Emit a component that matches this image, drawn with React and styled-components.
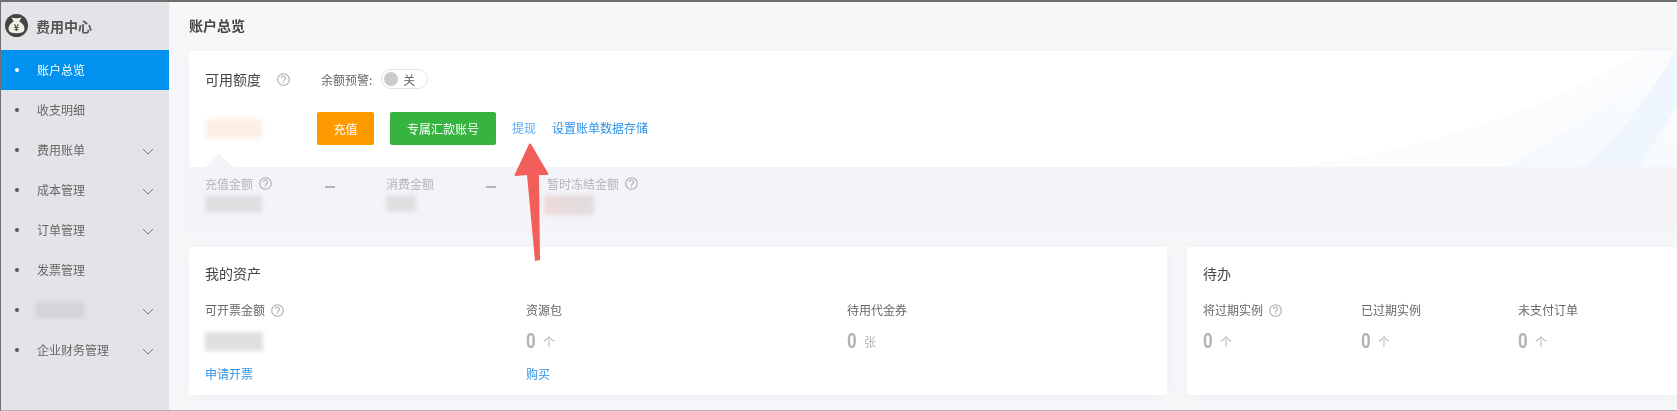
import React from 'react';
import styled, { createGlobalStyle } from 'styled-components';

const Global = createGlobalStyle`
  html, body { margin: 0; padding: 0; background: #f6f7f9; }
  body { font-family: "Noto Sans CJK SC", "Liberation Sans", sans-serif; font-size: 12px; color: #666; }
`;

const Frame = styled.div`
  box-sizing: border-box;
  position: relative;
  width: 1677px;
  height: 411px;
  display: flex;
  overflow: hidden;
  background: #f6f7f9;
  border-top: 2px solid #6f6f6f;
  border-left: 1px solid #6f6f6f;
  border-bottom: 1px solid #b4b4b4;
  filter: blur(0.35px);
`;

const Sidebar = styled.nav`
  flex: 0 0 168px;
  background: #e4e3e7;
`;

const Brand = styled.div`
  box-sizing: border-box;
  height: 48px;
  display: flex;
  align-items: center;
  gap: 8px;
  padding: 0 0 1px 4px;
  font-size: 14px;
  font-weight: 700;
  color: #555;
`;

const NavItem = styled.div`
  box-sizing: border-box;
  height: 40px;
  display: flex;
  align-items: center;
  padding: 0 0 1px 14px;
  color: ${p => (p.$active ? '#fff' : '#666')};
  background: ${p => (p.$active ? '#0092ee' : 'transparent')};
`;

const Bullet = styled.i`
  flex: 0 0 4px;
  height: 4px;
  border-radius: 50%;
  margin-right: 18px;
  background: ${p => (p.$active ? '#fff' : '#555')};
`;

const NavLabel = styled.span`
  flex: 1;
`;

const Chevron = styled.svg`
  width: 12px;
  height: 7px;
  margin-right: 15px;
  margin-top: 3px;
  fill: none;
  stroke: #777;
  stroke-width: 1;
`;

const Main = styled.main`
  flex: 1;
  min-width: 0;
  padding-left: 20px;
`;

const PageTitle = styled.h1`
  margin: 0;
  height: 49px;
  line-height: 46px;
  font-size: 14px;
  font-weight: 700;
  color: #444;
`;

const Card = styled.section`
  background: #fff;
  box-shadow: 0 2px 12px rgba(120, 125, 150, 0.06);
`;

const OverviewCard = styled(Card)`
  height: 177px;
  margin-bottom: 19px;
  display: flex;
  flex-direction: column;
`;

const OverviewTop = styled.div`
  position: relative;
  flex: 0 0 116px;
  box-sizing: border-box;
  padding: 18px 16px 0;
  overflow: hidden;
`;

const Curves = styled.svg`
  position: absolute;
  right: 0;
  top: 0;
  width: 400px;
  height: 116px;
`;

const Notch = styled.i`
  position: absolute;
  left: 16px;
  bottom: 0;
  width: 0;
  height: 0;
  border-left: 14px solid transparent;
  border-right: 14px solid transparent;
  border-bottom: 13px solid #f4f4f8;
`;

const HeadRow = styled.div`
  position: relative;
  height: 20px;
  display: flex;
  align-items: center;
`;

const BigLabel = styled.span`
  font-size: 14px;
  color: #444;
  line-height: 20px;
`;

const Help = styled.svg`
  flex: none;
  width: 13px;
  height: 13px;
  margin-left: ${p => p.$gap || 6}px;
  fill: none;
  stroke: #adadad;
  stroke-width: 1.1;
`;

const WarnLabel = styled.span`
  margin-left: 31px;
  color: #666;
`;

const Toggle = styled.div`
  box-sizing: border-box;
  width: 47px;
  height: 20px;
  margin-left: 9px;
  border: 1px solid #e4e4e4;
  border-radius: 10px;
  display: flex;
  align-items: center;
  padding-left: 2px;
  color: #666;
`;

const Knob = styled.i`
  width: 14px;
  height: 14px;
  border-radius: 50%;
  background: #cbcbcb;
  margin-right: 5px;
`;

const ActionRow = styled.div`
  position: relative;
  height: 33px;
  margin-top: 23px;
  display: flex;
  align-items: center;
`;

const Smudge = styled.span`
  flex: none;
  display: block;
  width: ${p => p.$w}px;
  height: ${p => p.$h}px;
  margin-left: ${p => p.$l || 0}px;
  background: ${p => p.$c || '#dfdfe1'};
  filter: blur(2px);
`;

const AmountSlot = styled.div`
  width: 111px;
  margin-left: 1px;
`;

const ColorButton = styled.button`
  box-sizing: border-box;
  width: ${p => p.$w}px;
  height: 33px;
  margin-right: ${p => p.$r}px;
  border: 0;
  border-radius: 2px;
  background: ${p => p.$bg};
  color: #fff;
  font: inherit;
`;

const Link = styled.a`
  color: ${p => (p.$soft ? '#5aa9ee' : '#2f93e6')};
  margin-right: 16px;
  margin-bottom: 2px;
`;

const OverviewBottom = styled.div`
  flex: 1;
  background: #f4f4f8;
  display: flex;
  align-items: flex-start;
  padding: 7px 0 0 16px;
  color: #b5b5b9;
`;

const Stat = styled.div`
  width: ${p => p.$w}px;
  flex: none;
`;

const StatLabel = styled.div`
  display: flex;
  align-items: center;
  height: 18px;
`;

const Dash = styled.i`
  flex: none;
  width: 10px;
  height: 2px;
  background: #b5b5b9;
  margin: 12px ${p => p.$r}px 0 ${p => p.$l}px;
`;

const StatValue = styled.div`
  margin-top: 3px;
`;

const BottomRow = styled.div`
  display: flex;
  gap: 20px;
`;

const PanelCard = styled(Card)`
  box-sizing: border-box;
  height: 148px;
  padding: 15px 0 0 16px;
  flex: ${p => (p.$wide ? '0 0 978px' : '1')};
`;

const PanelTitle = styled.h2`
  margin: 0;
  height: 22px;
  line-height: 22px;
  font-size: 14px;
  font-weight: 400;
  color: #444;
`;

const Columns = styled.div`
  display: flex;
  margin-top: 17px;
`;

const Column = styled.div`
  flex: 0 0 ${p => p.$w}px;
`;

const ColumnLabel = styled.div`
  height: 18px;
  line-height: 18px;
  display: flex;
  align-items: center;
  color: #666;
`;

const Count = styled.div`
  height: 30px;
  margin-top: 7px;
  display: flex;
  align-items: center;
  gap: 8px;
  color: #b5b5b5;
  font-size: 12px;
`;

const Digit = styled.b`
  display: block;
  width: 9px;
  font-family: Roboto, "Liberation Sans", sans-serif;
  font-size: 21px;
  font-weight: 700;
  color: #b3b3b3;
  transform: scaleX(0.8);
  transform-origin: left center;
`;

const AmountBox = styled.div`
  height: 30px;
  margin-top: 7px;
  display: flex;
  align-items: center;
`;

const ColumnLink = styled.a`
  display: block;
  margin-top: 9px;
  line-height: 18px;
  color: #2f93e6;
`;

const Arrow = styled.svg`
  position: absolute;
  left: 510px;
  top: 138px;
  width: 44px;
  height: 124px;
  fill: #f25e5a;
`;

const BagLogo = () => (
  <svg width="23" height="23" viewBox="0 0 23 23">
    <circle cx="11.5" cy="11.5" r="11.5" fill="#444" />
    <path d="M6.5 3.5 q5 1.4 10 0 l-2.2 4 q5.2 2.8 5.2 7.4 q0 4.4 -8 4.4 q-8 0 -8 -4.4 q0 -4.6 5.2 -7.4 z" fill="#f2efe6" />
    <text x="11.5" y="17" textAnchor="middle" fontSize="9" fontWeight="700" fill="#444">¥</text>
  </svg>
);

const HelpIcon = ({ gap }) => (
  <Help $gap={gap} viewBox="0 0 13 13">
    <circle cx="6.5" cy="6.5" r="5.8" />
    <path d="M4.5 5 a2 2 0 1 1 3.1 1.7 q-1.1 .6 -1.1 1.7" />
    <path d="M6.5 9.3 v1.1" />
  </Help>
);

const nav = [
  { label: '账户总览', active: true },
  { label: '收支明细' },
  { label: '费用账单', more: true },
  { label: '成本管理', more: true },
  { label: '订单管理', more: true },
  { label: '发票管理' },
  { hidden: true, more: true },
  { label: '企业财务管理', more: true },
];

const Unit = ({ n, u }) => (
  <Count><Digit>{n}</Digit><span>{u}</span></Count>
);

export default function App() {
  return (
    <>
      <Global />
      <Frame>
        <Sidebar>
          <Brand><BagLogo />费用中心</Brand>
          {nav.map((item, i) => (
            <NavItem key={i} $active={item.active}>
              <Bullet $active={item.active} />
              <NavLabel>
                {item.hidden ? <Smudge $w={50} $h={16} $c="#d4d3d7" $l={-2} /> : item.label}
              </NavLabel>
              {item.more && (
                <Chevron viewBox="0 0 12 7"><polyline points="1,1 6,6 11,1" /></Chevron>
              )}
            </NavItem>
          ))}
        </Sidebar>
        <Main>
          <PageTitle>账户总览</PageTitle>
          <OverviewCard>
            <OverviewTop>
              <Curves viewBox="0 0 400 116" preserveAspectRatio="none">
                <defs>
                  <linearGradient id="sweep" x1="0" y1="1" x2="1" y2="0">
                    <stop offset="0" stopColor="#f4f9fe" />
                    <stop offset="1" stopColor="#fbfcfe" />
                  </linearGradient>
                </defs>
                <path d="M20 116 C160 96 290 50 366 0 H400 V116 Z" fill="#fbfcfe" />
                <path d="M230 116 C290 82 350 40 390 0 H400 V116 Z" fill="url(#sweep)" />
                <path d="M306 116 C345 84 375 40 398 0 H400 V55 L363 116 Z" fill="#eff6fe" />
              </Curves>
              <HeadRow>
                <BigLabel>可用额度</BigLabel>
                <HelpIcon gap={16} />
                <WarnLabel>余额预警:</WarnLabel>
                <Toggle><Knob />关</Toggle>
              </HeadRow>
              <ActionRow>
                <AmountSlot><Smudge $w={56} $h={19} $c="#fdeee2" /></AmountSlot>
                <ColorButton $w={57} $r={16} $bg="#ff9900">充值</ColorButton>
                <ColorButton $w={106} $r={16} $bg="#36b43f">专属汇款账号</ColorButton>
                <Link $soft>提现</Link>
                <Link>设置账单数据存储</Link>
              </ActionRow>
              <Notch />
            </OverviewTop>
            <OverviewBottom>
              <Stat $w={120}>
                <StatLabel>充值金额<HelpIcon gap={6} /></StatLabel>
                <StatValue><Smudge $w={57} $h={18} /></StatValue>
              </Stat>
              <Dash $l={0} $r={51} />
              <Stat $w={100}>
                <StatLabel>消费金额</StatLabel>
                <StatValue><Smudge $w={30} $h={17} /></StatValue>
              </Stat>
              <Dash $l={0} $r={51} />
              <Stat $w={120}>
                <StatLabel>暂时冻结金额<HelpIcon gap={6} /></StatLabel>
                <StatValue>
                  <Smudge $w={50} $h={20} $l={-3} $c="linear-gradient(90deg, #eed9da, #dfdddf)" />
                </StatValue>
              </Stat>
            </OverviewBottom>
          </OverviewCard>
          <BottomRow>
            <PanelCard $wide>
              <PanelTitle>我的资产</PanelTitle>
              <Columns>
                <Column $w={321}>
                  <ColumnLabel>可开票金额<HelpIcon gap={6} /></ColumnLabel>
                  <AmountBox><Smudge $w={58} $h={19} /></AmountBox>
                  <ColumnLink>申请开票</ColumnLink>
                </Column>
                <Column $w={321}>
                  <ColumnLabel>资源包</ColumnLabel>
                  <Unit n="0" u="个" />
                  <ColumnLink>购买</ColumnLink>
                </Column>
                <Column $w={300}>
                  <ColumnLabel>待用代金券</ColumnLabel>
                  <Unit n="0" u="张" />
                </Column>
              </Columns>
            </PanelCard>
            <PanelCard>
              <PanelTitle>待办</PanelTitle>
              <Columns>
                <Column $w={158}>
                  <ColumnLabel>将过期实例<HelpIcon gap={6} /></ColumnLabel>
                  <Unit n="0" u="个" />
                </Column>
                <Column $w={157}>
                  <ColumnLabel>已过期实例</ColumnLabel>
                  <Unit n="0" u="个" />
                </Column>
                <Column $w={150}>
                  <ColumnLabel>未支付订单</ColumnLabel>
                  <Unit n="0" u="个" />
                </Column>
              </Columns>
            </PanelCard>
          </BottomRow>
        </Main>
        <Arrow viewBox="0 0 44 124">
          <path d="M18 4 Q19 3 20 4 L37 33 Q38 35 36 35 L28 35 L29 120 L24 121 L16 35 L5 36 Q3 36 4 34 Z" />
        </Arrow>
      </Frame>
    </>
  );
}
